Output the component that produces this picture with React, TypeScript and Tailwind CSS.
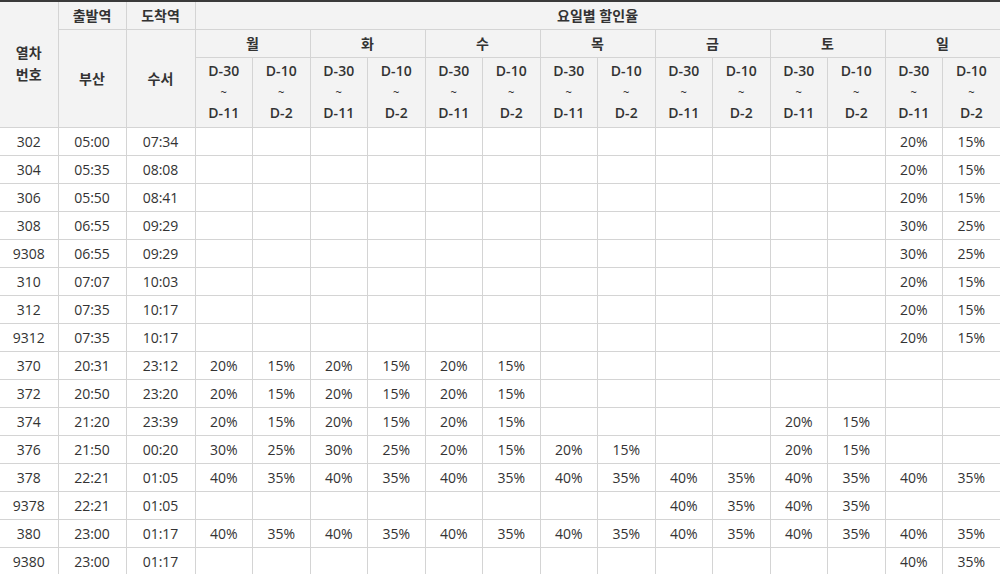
const days = ["월", "화", "수", "목", "금", "토", "일"];

const E = ["", ""];
const P = (a: string, b: string) => [a, b];

// 14 cells per row: 월..일 × (D-30~D-11, D-10~D-2)
const rows: { no: string; dep: string; arr: string; cells: string[][] }[] = [
  { no: "302", dep: "05:00", arr: "07:34", cells: [E, E, E, E, E, E, P("20%", "15%")] },
  { no: "304", dep: "05:35", arr: "08:08", cells: [E, E, E, E, E, E, P("20%", "15%")] },
  { no: "306", dep: "05:50", arr: "08:41", cells: [E, E, E, E, E, E, P("20%", "15%")] },
  { no: "308", dep: "06:55", arr: "09:29", cells: [E, E, E, E, E, E, P("30%", "25%")] },
  { no: "9308", dep: "06:55", arr: "09:29", cells: [E, E, E, E, E, E, P("30%", "25%")] },
  { no: "310", dep: "07:07", arr: "10:03", cells: [E, E, E, E, E, E, P("20%", "15%")] },
  { no: "312", dep: "07:35", arr: "10:17", cells: [E, E, E, E, E, E, P("20%", "15%")] },
  { no: "9312", dep: "07:35", arr: "10:17", cells: [E, E, E, E, E, E, P("20%", "15%")] },
  { no: "370", dep: "20:31", arr: "23:12", cells: [P("20%", "15%"), P("20%", "15%"), P("20%", "15%"), E, E, E, E] },
  { no: "372", dep: "20:50", arr: "23:20", cells: [P("20%", "15%"), P("20%", "15%"), P("20%", "15%"), E, E, E, E] },
  { no: "374", dep: "21:20", arr: "23:39", cells: [P("20%", "15%"), P("20%", "15%"), P("20%", "15%"), E, E, P("20%", "15%"), E] },
  { no: "376", dep: "21:50", arr: "00:20", cells: [P("30%", "25%"), P("30%", "25%"), P("20%", "15%"), P("20%", "15%"), E, P("20%", "15%"), E] },
  { no: "378", dep: "22:21", arr: "01:05", cells: [P("40%", "35%"), P("40%", "35%"), P("40%", "35%"), P("40%", "35%"), P("40%", "35%"), P("40%", "35%"), P("40%", "35%")] },
  { no: "9378", dep: "22:21", arr: "01:05", cells: [E, E, E, E, P("40%", "35%"), P("40%", "35%"), E] },
  { no: "380", dep: "23:00", arr: "01:17", cells: [P("40%", "35%"), P("40%", "35%"), P("40%", "35%"), P("40%", "35%"), P("40%", "35%"), P("40%", "35%"), P("40%", "35%")] },
  { no: "9380", dep: "23:00", arr: "01:17", cells: [E, E, E, E, E, E, P("40%", "35%")] },
];

const th = "border border-[#d4d4d4] bg-[#f3f3f3] font-bold text-center align-middle p-0";
const td = "border border-[#d4d4d4] text-center align-middle p-0 h-[28px]";

export default function App() {
  return (
    <div className="w-[1000px] h-[574px] overflow-hidden bg-white text-[#333] text-[14px] font-['Open_Sans','Noto_Sans_CJK_KR',sans-serif]">
      <table className="w-[1000px] table-fixed border-collapse border-t-2 border-t-[#3a3a3a]">
        <colgroup>
          <col className="w-[58px]" />
          <col className="w-[68px]" />
          <col className="w-[69px]" />
          {Array.from({ length: 14 }).map((_, i) => (
            <col key={i} className="w-[57.5px]" />
          ))}
        </colgroup>
        <thead>
          <tr className="h-[28px]">
            <th rowSpan={3} className={`${th} border-l-0 leading-[22px]`}>
              열차
              <br />
              번호
            </th>
            <th className={th}>출발역</th>
            <th className={th}>도착역</th>
            <th colSpan={14} className={th}>
              요일별 할인율
            </th>
          </tr>
          <tr className="h-[28px]">
            <th rowSpan={2} className={th}>
              부산
            </th>
            <th rowSpan={2} className={th}>
              수서
            </th>
            {days.map((d) => (
              <th key={d} colSpan={2} className={th}>
                {d}
              </th>
            ))}
          </tr>
          <tr className="h-[70px]">
            {days.map((d) => (
              <>
                <th key={d + "a"} className={`${th} font-semibold leading-[20.5px]`}>
                  D-30
                  <br />
                  <span className="text-[11px]">~</span>
                  <br />
                  D-11
                </th>
                <th key={d + "b"} className={`${th} font-semibold leading-[20.5px]`}>
                  D-10
                  <br />
                  <span className="text-[11px]">~</span>
                  <br />
                  D-2
                </th>
              </>
            ))}
          </tr>
        </thead>
        <tbody>
          {rows.map((r) => (
            <tr key={r.no}>
              <td className={`${td} border-l-0`}>{r.no}</td>
              <td className={td}>{r.dep}</td>
              <td className={td}>{r.arr}</td>
              {r.cells.flat().map((v, i) => (
                <td key={i} className={td}>
                  {v}
                </td>
              ))}
            </tr>
          ))}
        </tbody>
      </table>
    </div>
  );
}
